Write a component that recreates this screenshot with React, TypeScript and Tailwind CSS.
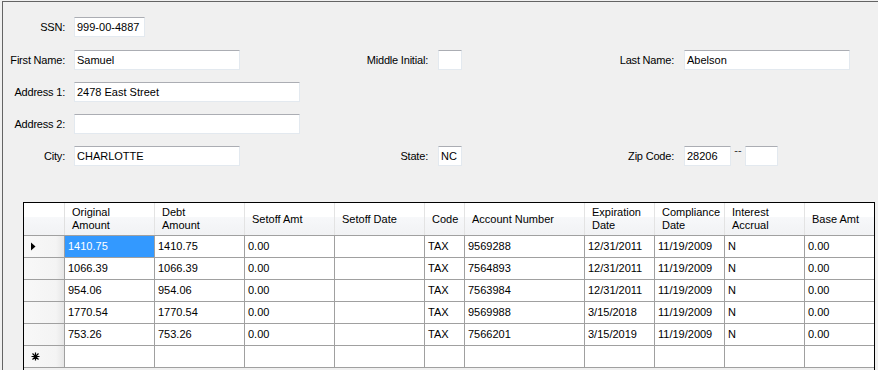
import React from "react";

type Col = { label: string[]; w: string };

const cols: Col[] = [
  { label: ["Original", "Amount"], w: "w-[90px]" },
  { label: ["Debt", "Amount"], w: "w-[90px]" },
  { label: ["Setoff Amt"], w: "w-[90px]" },
  { label: ["Setoff Date"], w: "w-[90px]" },
  { label: ["Code"], w: "w-[40px]" },
  { label: ["Account Number"], w: "w-[120px]" },
  { label: ["Expiration", "Date"], w: "w-[70px]" },
  { label: ["Compliance", "Date"], w: "w-[70px]" },
  { label: ["Interest", "Accrual"], w: "w-[80px]" },
  { label: ["Base Amt"], w: "w-[69px]" },
];

const rows: string[][] = [
  ["1410.75", "1410.75", "0.00", "", "TAX", "9569288", "12/31/2011", "11/19/2009", "N", "0.00"],
  ["1066.39", "1066.39", "0.00", "", "TAX", "7564893", "12/31/2011", "11/19/2009", "N", "0.00"],
  ["954.06", "954.06", "0.00", "", "TAX", "7563984", "12/31/2011", "11/19/2009", "N", "0.00"],
  ["1770.54", "1770.54", "0.00", "", "TAX", "9569988", "3/15/2018", "11/19/2009", "N", "0.00"],
  ["753.26", "753.26", "0.00", "", "TAX", "7566201", "3/15/2019", "11/19/2009", "N", "0.00"],
];

function Box({ w, value }: { w: string; value?: string }) {
  return (
    <div
      className={`${w} h-[20px] shrink-0 bg-white border border-[#e3e9ef] border-t-[#abadb3] flex items-center pl-[2px] whitespace-nowrap overflow-hidden`}
    >
      {value}
    </div>
  );
}

function Label({ w, text }: { w: string; text: string }) {
  return <div className={`${w} shrink-0 text-right whitespace-nowrap tracking-[-0.2px]`}>{text}</div>;
}

const headerBg =
  "bg-[linear-gradient(#ffffff_0%,#ffffff_45%,#f7f8fa_45%,#f1f2f4_100%)]";
const rowHeadBg =
  "bg-[linear-gradient(90deg,#f8f8f8_0%,#f4f4f4_80%,#e6e6e6_100%)]";

export default function App() {
  return (
    <div className="w-[878px] h-[370px] overflow-hidden bg-[#f0f0f0] pl-[2px] pt-[1px] font-['Liberation_Sans',Arial,sans-serif] text-[11px] text-black leading-[13px]">
      <div className="h-full border-l border-t border-[#646464] pt-[15px]">
        {/* form */}
        <div className="flex items-center">
          <Label w="w-[62px]" text="SSN:" />
          <div className="ml-[9px]">
            <Box w="w-[71px]" value="999-00-4887" />
          </div>
        </div>

        <div className="flex items-center mt-[13px]">
          <Label w="w-[62px]" text="First Name:" />
          <div className="ml-[9px]">
            <Box w="w-[166px]" value="Samuel" />
          </div>
          <Label w="w-[188px]" text="Middle Initial:" />
          <div className="ml-[10px]">
            <Box w="w-[24px]" />
          </div>
          <Label w="w-[212px]" text="Last Name:" />
          <div className="ml-[10px]">
            <Box w="w-[166px]" value="Abelson" />
          </div>
        </div>

        <div className="flex items-center mt-[12px]">
          <Label w="w-[62px]" text="Address 1:" />
          <div className="ml-[9px]">
            <Box w="w-[226px]" value="2478 East Street" />
          </div>
        </div>

        <div className="flex items-center mt-[12px]">
          <Label w="w-[62px]" text="Address 2:" />
          <div className="ml-[9px]">
            <Box w="w-[226px]" />
          </div>
        </div>

        <div className="flex items-center mt-[12px]">
          <Label w="w-[62px]" text="City:" />
          <div className="ml-[9px]">
            <Box w="w-[166px]" value="CHARLOTTE" />
          </div>
          <Label w="w-[188px]" text="State:" />
          <div className="ml-[10px]">
            <Box w="w-[24px]" value="NC" />
          </div>
          <Label w="w-[212px]" text="Zip Code:" />
          <div className="ml-[10px]">
            <Box w="w-[47px]" value="28206" />
          </div>
          <div className="w-[14px] self-start text-center leading-[8px] text-[#333]">--</div>
          <Box w="w-[33px]" />
        </div>

        {/* grid */}
        <div className="ml-[20px] mt-[36px] w-[852px] border border-black bg-white">
          <div className="flex h-[33px] border-b border-[#a0a0a0]">
            <div className={`w-[41px] shrink-0 border-r border-[#e0e0e0] ${headerBg}`} />
            {cols.map((c, i) => (
              <div
                key={i}
                className={`${c.w} shrink-0 flex flex-col justify-center pl-[7px] ${headerBg} ${
                  i < cols.length - 1 ? "border-r border-[#e3e3e3]" : ""
                }`}
              >
                {c.label.map((l) => (
                  <div key={l} className="whitespace-nowrap">
                    {l}
                  </div>
                ))}
              </div>
            ))}
          </div>

          {rows.map((r, ri) => (
            <div key={ri} className="flex h-[22px] border-b border-[#a0a0a0]">
              <div className={`w-[41px] shrink-0 border-r border-[#a0a0a0] ${rowHeadBg} flex items-center pl-[7px]`}>
                {ri === 0 && (
                  <svg width="5" height="9" viewBox="0 0 5 9">
                    <path d="M0 0.5 L4.5 4.5 L0 8.5 Z" fill="#000" />
                  </svg>
                )}
              </div>
              {r.map((v, ci) => (
                <div
                  key={ci}
                  className={`${cols[ci].w} shrink-0 flex items-center pl-[3px] whitespace-nowrap ${
                    ci < cols.length - 1 ? "border-r border-[#a0a0a0]" : ""
                  } ${ri === 0 && ci === 0 ? "bg-[#3399ff] text-white" : ""}`}
                >
                  {v}
                </div>
              ))}
            </div>
          ))}

          <div className="flex h-[22px] border-b border-[#a0a0a0]">
            <div className={`w-[41px] shrink-0 border-r border-[#a0a0a0] ${rowHeadBg} flex items-center pl-[7px]`}>
              <svg width="9" height="9" viewBox="0 0 9 9">
                <path
                  d="M4.5 0.5 V8.5 M0.5 4.5 H8.5 M1.5 1.5 L7.5 7.5 M7.5 1.5 L1.5 7.5"
                  stroke="#000"
                  strokeWidth="1.2"
                />
              </svg>
            </div>
            {cols.map((c, ci) => (
              <div
                key={ci}
                className={`${c.w} shrink-0 ${ci < cols.length - 1 ? "border-r border-[#a0a0a0]" : ""}`}
              />
            ))}
          </div>
          <div className="h-[20px] bg-[#f0f0f0]" />
        </div>
      </div>
    </div>
  );
}
